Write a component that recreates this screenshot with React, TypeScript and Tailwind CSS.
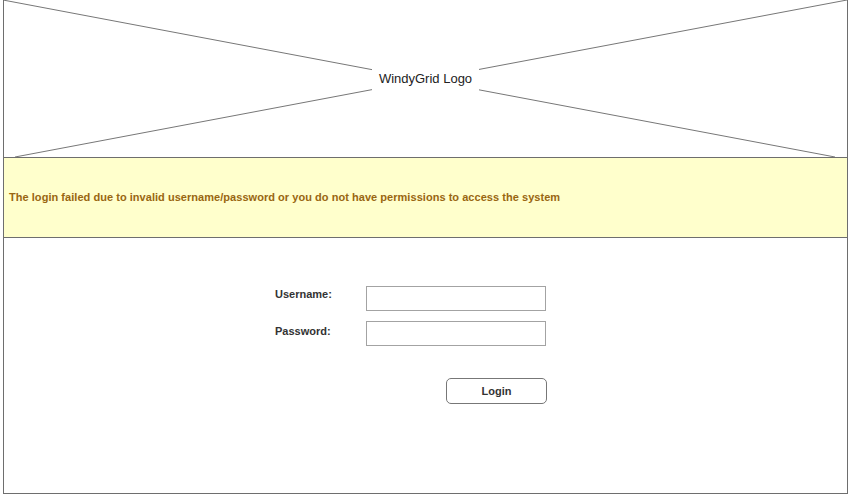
import React from 'react';

const App: React.FC = () => {
  return (
    <div className="w-[849px] h-[498px] bg-white" style={{ fontFamily: '"Liberation Sans", Arial, sans-serif' }}>
      <div className="ml-[3px] w-[845px] h-[494px] border-x border-b border-[#6e6e6e] flex flex-col">
        {/* Logo placeholder */}
        <div className="relative h-[158px] border-b border-[#6e6e6e] flex items-center justify-center">
          <svg className="absolute inset-0" width="843" height="157" viewBox="0 0 843 157">
            <line x1="-1" y1="0" x2="831" y2="157" stroke="#777" strokeWidth="1" />
            <line x1="11" y1="157" x2="843" y2="0" stroke="#777" strokeWidth="1" />
          </svg>
          <div className="relative bg-white px-[7px] py-[8px] mt-[-1px] text-[13px] text-[#222] leading-[15px]">
            WindyGrid Logo
          </div>
        </div>

        {/* Error band */}
        <div className="h-[80px] bg-[#ffffcc] border-b border-[#6e6e6e] flex items-center pl-[5px]">
          <span className="text-[11px] font-bold text-[#996611] tracking-[0.04px]">
            The login failed due to invalid username/password or you do not have permissions to access the system
          </span>
        </div>

        {/* Login form */}
        <div className="pl-[271px] pt-[48px] flex flex-col">
          <div className="flex items-start">
            <label className="w-[91px] pt-[2px] text-[11px] font-bold text-[#333] leading-[13px]">Username:</label>
            <input className="w-[180px] h-[25px] border border-[#a3a3a3] bg-white outline-none" />
          </div>
          <div className="flex items-start mt-[10px]">
            <label className="w-[91px] pt-[4px] text-[11px] font-bold text-[#333] leading-[13px]">Password:</label>
            <input type="password" className="w-[180px] h-[25px] border border-[#a3a3a3] bg-white outline-none" />
          </div>
          <div className="pl-[171px] mt-[32px]">
            <button className="w-[101px] h-[26px] border border-[#777] rounded-[5px] bg-white text-[11px] font-bold text-[#333]">
              Login
            </button>
          </div>
        </div>
      </div>
    </div>
  );
};

export default App;
